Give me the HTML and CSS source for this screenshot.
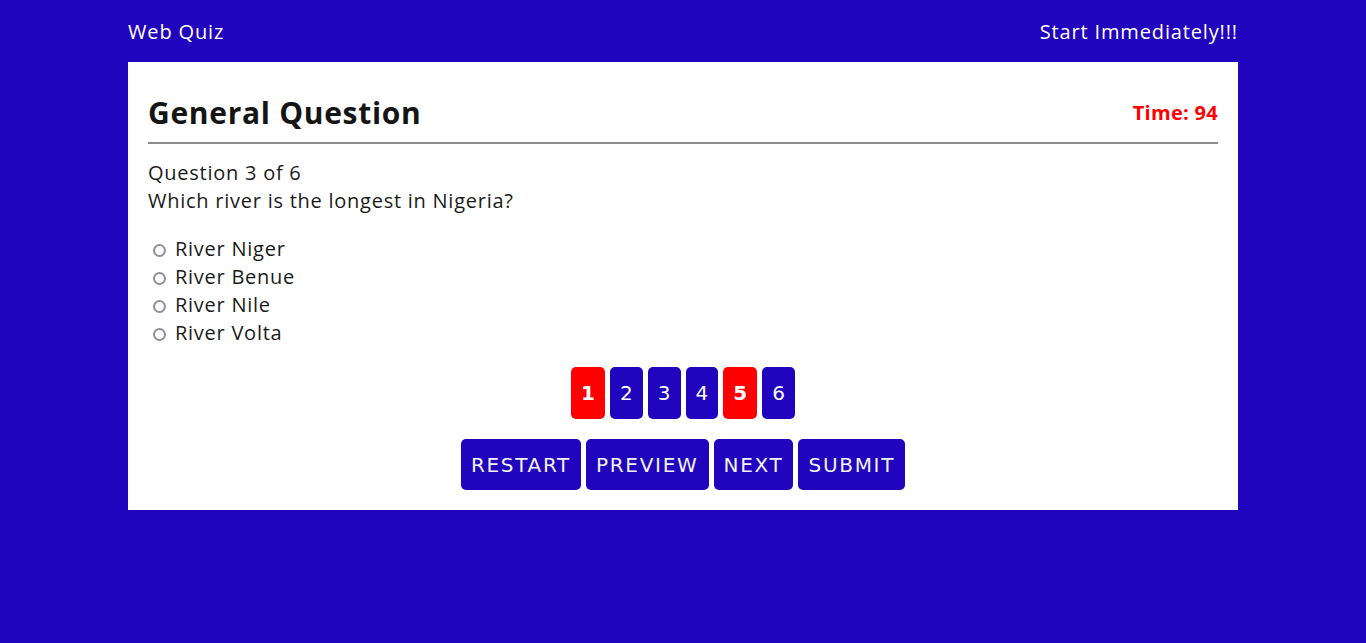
FILE: index.html
```html
<!DOCTYPE html>
<html lang="en">
<head>
<meta charset="utf-8">
<title>Web Quiz</title>
<link rel="stylesheet" href="styles.css">
</head>
<body>
<header class="topbar">
  <div class="brand">Web Quiz</div>
  <div class="tagline">Start Immediately!!!</div>
</header>
<main class="card">
  <div class="card-head">
    <h1 class="title">General Question</h1>
    <div class="timer">Time: 94</div>
  </div>
  <div class="question">
    <div>Question 3 of 6</div>
    <div>Which river is the longest in Nigeria?</div>
  </div>
  <div class="options">
    <label class="option"><input type="radio" name="q"> River Niger</label>
    <label class="option"><input type="radio" name="q"> River Benue</label>
    <label class="option"><input type="radio" name="q"> River Nile</label>
    <label class="option"><input type="radio" name="q"> River Volta</label>
  </div>
  <div class="pager">
    <button class="num done">1</button>
    <button class="num">2</button>
    <button class="num">3</button>
    <button class="num">4</button>
    <button class="num done">5</button>
    <button class="num">6</button>
  </div>
  <div class="actions">
    <button class="act">RESTART</button>
    <button class="act">PREVIEW</button>
    <button class="act">NEXT</button>
    <button class="act">SUBMIT</button>
  </div>
</main>
</body>
</html>
```
FILE: styles.css
```css
html, body {
  margin: 0;
  padding: 0;
}
body {
  background: #2104bd;
  font-family: "Open Sans", "Noto Sans", sans-serif;
  min-height: 643px;
}
.topbar {
  width: 1110px;
  margin: 0 auto;
  height: 62px;
  display: flex;
  justify-content: space-between;
  align-items: center;
  color: #ffffff;
  font-size: 20px;
  letter-spacing: 0.85px;
}
.card {
  width: 1110px;
  box-sizing: border-box;
  margin: 0 auto;
  background: #ffffff;
  padding: 20px;
  color: #1a1a1a;
}
.card-head {
  display: flex;
  justify-content: space-between;
  align-items: center;
  height: 60px;
  border-bottom: 2px solid #8c8c8c;
}
.title {
  margin: 0;
  font-size: 30px;
  font-weight: 700;
  color: #151515;
  letter-spacing: 0.7px;
}
.timer {
  color: #ff0000;
  font-weight: 700;
  font-size: 20px;
  letter-spacing: 0.3px;
}
.question {
  margin-top: 15px;
  font-size: 20px;
  line-height: 28px;
  letter-spacing: 0.75px;
}
.options {
  margin-top: 20px;
  display: flex;
  flex-direction: column;
  font-size: 20px;
  line-height: 28px;
  letter-spacing: 0.75px;
}
.option input {
  appearance: none;
  -webkit-appearance: none;
  box-sizing: border-box;
  width: 13px;
  height: 13px;
  border: 2px solid #8f8f9a;
  border-radius: 50%;
  background: #ffffff;
  margin: 0 3px 0 5px;
  vertical-align: -1px;
}
.pager {
  margin-top: 20px;
  display: flex;
  justify-content: center;
  gap: 5px;
}
.num {
  height: 52px;
  padding: 0 10px;
  border: none;
  border-radius: 5px;
  background: #2104bd;
  color: #ffffff;
  font-family: "DejaVu Sans", sans-serif;
  font-size: 20px;
}
.num.done {
  background: #ff0000;
  font-weight: 700;
}
.actions {
  margin-top: 20px;
  display: flex;
  justify-content: center;
  gap: 5px;
}
.act {
  height: 51px;
  padding: 0 10px;
  border: none;
  border-radius: 5px;
  background: #2104bd;
  color: #f2f2f2;
  font-family: "DejaVu Sans", sans-serif;
  font-size: 20px;
  letter-spacing: 1.7px;
}
```
